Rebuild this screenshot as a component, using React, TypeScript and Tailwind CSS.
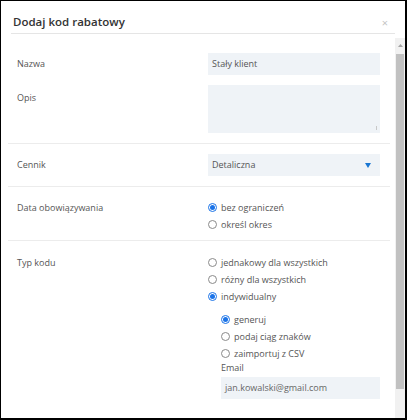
import React from 'react';

const font = { fontFamily: '"Open Sans", "Liberation Sans", sans-serif' };

const Radio: React.FC<{ checked?: boolean; label: string }> = ({ checked, label }) => (
  <label className="flex h-[17px] items-center gap-[4px] text-[9px] text-[#555]">
    {checked ? (
      <span className="flex h-[9px] w-[9px] items-center justify-center rounded-full border border-[#1a73e8] bg-white">
        <span className="h-[5px] w-[5px] rounded-full bg-[#1a73e8]" />
      </span>
    ) : (
      <span className="h-[9px] w-[9px] rounded-full border border-[#8a8a8a] bg-white" />
    )}
    <span>{label}</span>
  </label>
);

const Section: React.FC<{ className?: string; children: React.ReactNode }> = ({ className = '', children }) => (
  <div className={`border-b border-[#ececec] pl-[9px] pr-[10px] ${className}`}>{children}</div>
);

const Row: React.FC<{ label: string; labelClass?: string; children: React.ReactNode; className?: string }> = ({
  label,
  labelClass = '',
  children,
  className = '',
}) => (
  <div className={`flex ${className}`}>
    <div className={`flex-1 text-[9px] text-[#555] ${labelClass}`}>{label}</div>
    <div className="w-[172px]">{children}</div>
  </div>
);

export default function App() {
  return (
    <div style={font} className="flex h-[420px] w-[407px] flex-col border-b-2 border-l border-r-2 border-t border-black bg-white">
      <div className="mx-[10px] flex h-[33px] items-center justify-between border-b border-[#e5e5e5] pl-[2px] pt-[13px] pb-[3px]">
        <span className="text-[11.5px] font-semibold text-[#333]">Dodaj kod rabatowy</span>
        <span className="pr-[7px] text-[11px] leading-none text-[#c4c4c4]">×</span>
      </div>
      <div className="flex min-h-0 flex-1 pt-[4px]">
        <div className="flex-1 pl-[7px] pr-[5px]">
          <Section className="pb-[10px] pt-[15px]">
            <Row label="Nazwa" labelClass="flex items-center">
              <div className="flex h-[22px] items-center bg-[#eff3f7] pl-[4px] text-[9px] text-[#555]">Stały klient</div>
            </Row>
            <Row label="Opis" labelClass="pt-[6px]" className="mt-[10px]">
              <div className="relative h-[48px] bg-[#eff3f7]">
                <span className="absolute bottom-[3px] right-[3px] h-[4px] w-px bg-[#c8c8c8]" />
              </div>
            </Row>
          </Section>
          <Section className="py-[10px]">
            <Row label="Cennik" labelClass="flex items-center">
              <div className="flex h-[22px] items-center justify-between bg-[#eff3f7] pl-[4px] pr-[9px] text-[9px] text-[#555]">
                <span>Detaliczna</span>
                <svg width="6" height="5" viewBox="0 0 6 5">
                  <path d="M0 0h6L3 5z" fill="#1976d2" />
                </svg>
              </div>
            </Row>
          </Section>
          <Section className="pb-[7px] pt-[12px]">
            <Row label="Data obowiązywania" labelClass="leading-[17px]">
              <div className="flex flex-col">
                <Radio checked label="bez ograniczeń" />
                <Radio label="określ okres" />
              </div>
            </Row>
          </Section>
          <div className="pl-[9px] pr-[10px] pt-[13px]">
            <Row label="Typ kodu" labelClass="leading-[17px]">
              <div className="flex flex-col">
                <Radio label="jednakowy dla wszystkich" />
                <Radio label="różny dla wszystkich" />
                <Radio checked label="indywidualny" />
                <div className="mt-[6px] flex flex-col pl-[13px]">
                  <Radio checked label="generuj" />
                  <Radio label="podaj ciąg znaków" />
                  <Radio label="zaimportuj z CSV" />
                  <div className="text-[9px] leading-[12px] text-[#555]">Email</div>
                  <div className="mt-[3px] flex h-[22px] items-center bg-[#eff3f7] pl-[4px] text-[9px] text-[#666]">
                    jan.kowalski@gmail.com
                  </div>
                </div>
              </div>
            </Row>
          </div>
        </div>
        <div className="flex w-[10px] flex-col bg-[#f1f1f1]">
          <div className="flex h-[14px] items-center justify-center">
            <svg width="5" height="3" viewBox="0 0 5 3">
              <path d="M0 3L2.5 0L5 3z" fill="#a3a3a3" />
            </svg>
          </div>
          <div className="mx-[1px] mt-[2px] h-[335px] bg-[#c1c1c1]" />
        </div>
      </div>
    </div>
  );
}
